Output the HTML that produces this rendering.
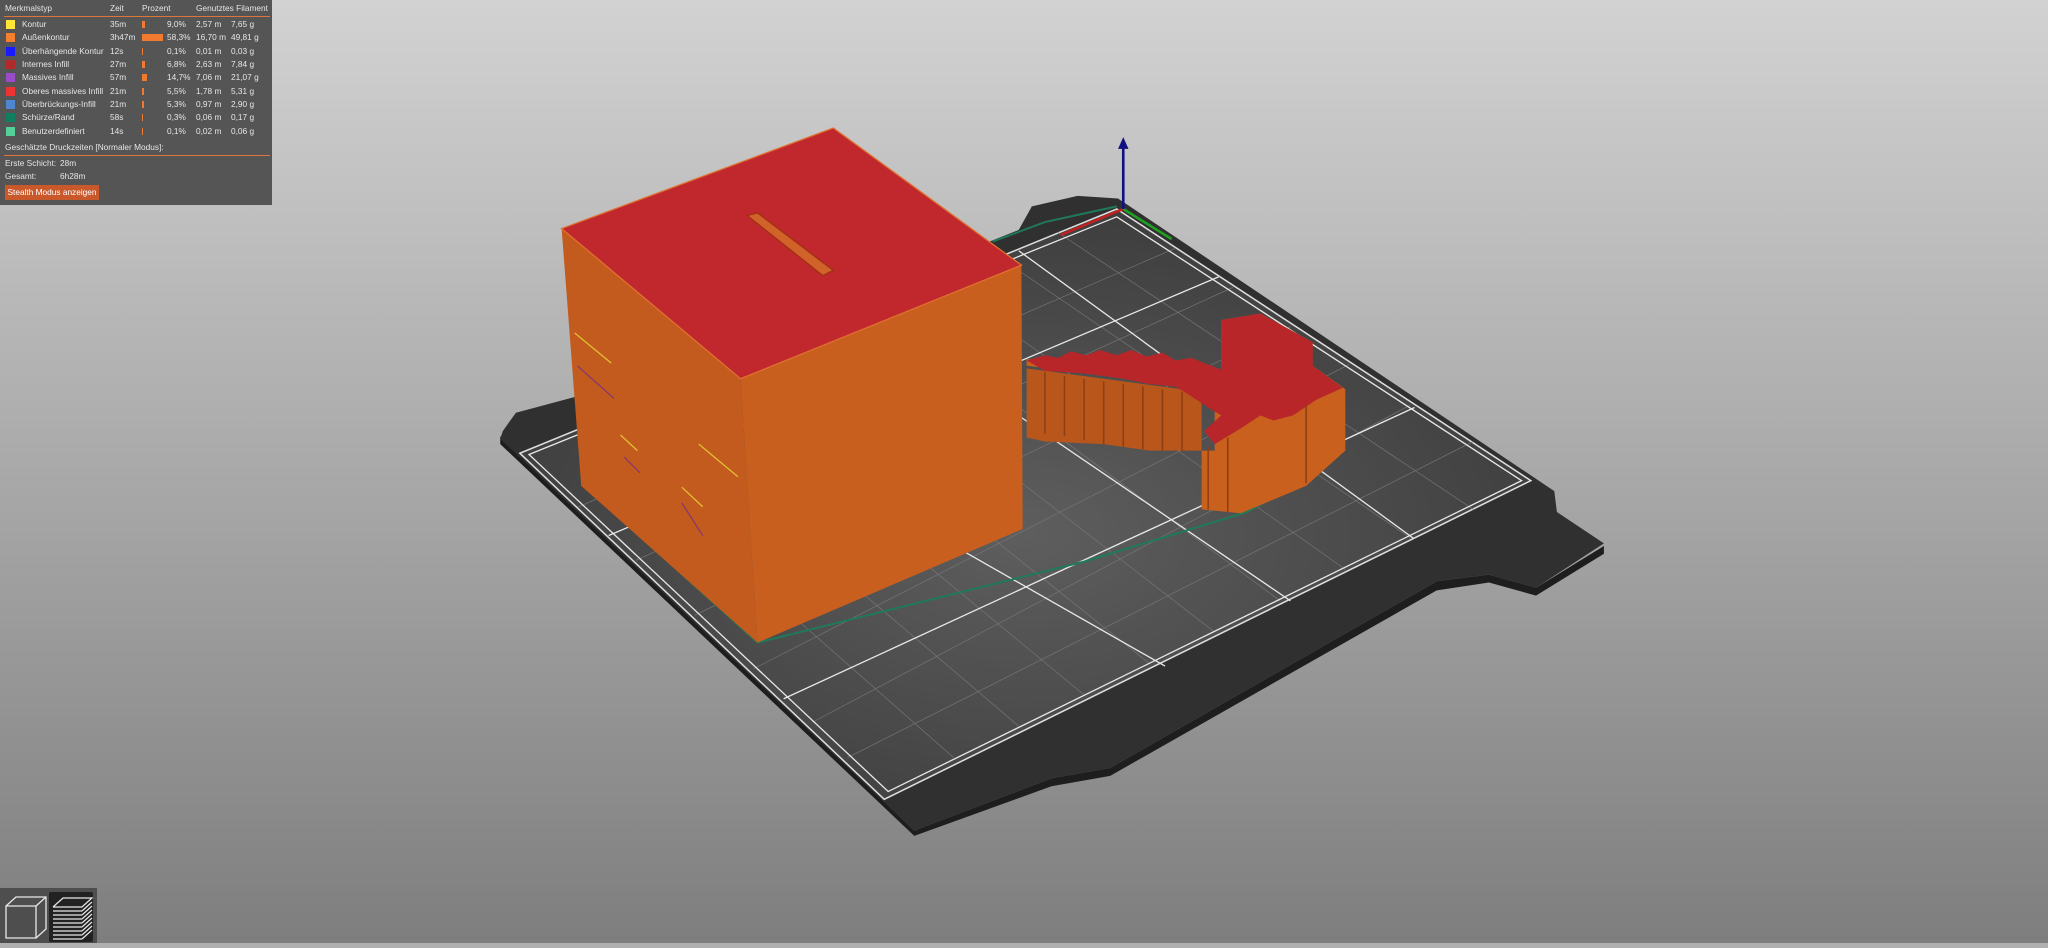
<!DOCTYPE html>
<html><head><meta charset="utf-8"><style>
html,body{margin:0;padding:0;width:2048px;height:943px;overflow:hidden;background:#b0b0b0;font-family:"Liberation Sans","DejaVu Sans",sans-serif}
#scene{position:absolute;left:0;top:0;width:2048px;height:943px}
#legend{position:absolute;left:0;top:0;width:272px;height:205px;background:#555556;color:#e6e6e6;font-size:8.3px}
.r{position:absolute;left:0;height:13px;line-height:13px;white-space:nowrap}
.r span{position:absolute}
.sw{position:absolute;left:6px;width:9px;height:9px;top:2px}
.bar{position:absolute;top:3px;height:7px;background:#f07a30}
.hl{position:absolute;left:4px;width:266px;height:1px;background:#e0743a}
#btn{position:absolute;left:5px;top:185px;width:94px;height:15px;background:#c9582a;color:#fff;font-size:8.3px;line-height:15px;text-align:center;white-space:nowrap}
#views{position:absolute;left:0;top:888px;width:97px;height:55px;background:#4e4e4e}
</style></head><body>
<svg id="scene" viewBox="0 0 1568 722" preserveAspectRatio="none">
<defs>
<linearGradient id="bg" x1="0" y1="0" x2="0" y2="1"><stop offset="0" stop-color="#d2d2d2"/><stop offset="0.5" stop-color="#a9a9a9"/><stop offset="1" stop-color="#7e7e7e"/></linearGradient>
<radialGradient id="gr" cx="0.5" cy="0.55" r="0.55"><stop offset="0" stop-color="#5e5e5e"/><stop offset="1" stop-color="#3e3e3e"/></radialGradient>
</defs>
<rect width="1568" height="722" fill="url(#bg)"/>
<!-- bed -->
<polygon points="383,340 700,640 805,602 850,594 1100,452 1140,446 1176,456 1228,424 1228,418 1176,450 1140,440 1100,445 850,588 805,596 700,636 383,334" fill="#1e1e1e"/>
<polygon points="385,330 395,316 440,304 470,300 780,176 790,158 825,150 856,152 1190,376 1192,392 1228,416 1176,450 1140,440 1100,445 850,588 805,596 700,636 383,336" fill="#303030"/>
<polygon points="398,347 855,160 1172,368 677,612" fill="url(#gr)" stroke="#ddd" stroke-width="1.2"/>
<g stroke="#777" stroke-width="0.5">
<line x1="443" y1="388" x2="900" y2="190"/><line x1="487" y1="429" x2="944" y2="220"/><line x1="532" y1="471" x2="988" y2="250"/><line x1="577" y1="512" x2="1033" y2="279"/><line x1="622" y1="553" x2="1080" y2="310"/><line x1="649" y1="580" x2="1128" y2="338"/>
<line x1="444" y1="328" x2="730" y2="580"/><line x1="490" y1="309" x2="780" y2="556"/><line x1="537" y1="290" x2="830" y2="532"/><line x1="583" y1="271" x2="880" y2="508"/><line x1="630" y1="252" x2="930" y2="484"/><line x1="675" y1="234" x2="980" y2="460"/><line x1="720" y1="216" x2="1030" y2="436"/><line x1="765" y1="197" x2="1080" y2="412"/><line x1="810" y1="178" x2="1128" y2="390"/>
</g>
<g stroke="#e8e8e8" stroke-width="1">
<line x1="466" y1="410" x2="933" y2="212"/><line x1="600" y1="535" x2="1083" y2="312"/>
<line x1="520" y1="298" x2="892" y2="510"/><line x1="665" y1="240" x2="988" y2="460"/><line x1="780" y1="192" x2="1082" y2="412"/>
<polygon points="405,348 855,166 1165,368 680,606" fill="none"/>
</g>
<polyline points="445,370 580,492 830,430 955,392 1010,360 1030,330" fill="none" stroke="#1f7a5a" stroke-width="1.5"/>
<polyline points="760,185 800,170 855,158" fill="none" stroke="#1f7a5a" stroke-width="1.5"/>
<!-- second object -->
<polygon points="786,280 930,298 930,345 920,345 920,390 950,393 1000,372 1030,345 1030,298 1005,280 1005,262 965,240 935,245 935,283 786,275" fill="#c9601e"/>
<polygon points="786,335 800,338 845,340 880,345 920,345 920,300 786,282" fill="#b8561c"/>
<polygon points="786,276 800,272 810,274 820,269 832,272 842,268 855,272 866,268 878,273 890,270 900,276 912,274 935,283 935,245 965,240 1005,262 1005,280 1028,297 1008,306 990,318 975,322 965,318 950,328 930,340 922,330 935,318 925,312 910,302 900,296 880,294 860,290 830,286 800,284" fill="#b8262a"/>
<g stroke="#8e3f14" stroke-width="1.2">
<line x1="800" y1="285" x2="800" y2="332"/><line x1="815" y1="288" x2="815" y2="334"/><line x1="830" y1="290" x2="830" y2="337"/><line x1="845" y1="292" x2="845" y2="340"/><line x1="860" y1="294" x2="860" y2="342"/><line x1="875" y1="296" x2="875" y2="344"/><line x1="890" y1="298" x2="890" y2="345"/><line x1="905" y1="300" x2="905" y2="346"/><line x1="925" y1="342" x2="925" y2="390"/><line x1="940" y1="335" x2="940" y2="392"/><line x1="1000" y1="310" x2="1000" y2="370"/>
</g>
<!-- box -->
<polygon points="430,175 567,290 580,492 445,372" fill="#c35a1e"/>
<polygon points="567,290 782,203 783,405 580,492" fill="#c95f1e"/>
<polygon points="430,175 638,98 782,203 567,290" fill="#c0282d" stroke="#e07030" stroke-width="1"/>
<polygon points="572,165 580,163 638,207 630,211" fill="#d0622a" stroke="#a03010" stroke-width="1"/>
<g stroke="#e0c030" stroke-width="1"><line x1="440" y1="255" x2="468" y2="278"/><line x1="475" y1="333" x2="488" y2="345"/><line x1="535" y1="340" x2="565" y2="365"/><line x1="522" y1="373" x2="538" y2="388"/></g>
<g stroke="#7a3080" stroke-width="0.8"><line x1="442" y1="280" x2="470" y2="305"/><line x1="478" y1="350" x2="490" y2="362"/><line x1="522" y1="385" x2="538" y2="410"/></g>
<line x1="860" y1="160" x2="812" y2="180" stroke="#c02020" stroke-width="2"/>
<line x1="860" y1="160" x2="897" y2="183" stroke="#20a020" stroke-width="2"/>
<line x1="860" y1="160" x2="860" y2="112" stroke="#101080" stroke-width="2"/>
<polygon points="856,114 864,114 860,105" fill="#101080"/>
</svg>
<div id="legend">
<div class="r" style="top:2px"><span style="left:5px">Merkmalstyp</span><span style="left:110px">Zeit</span><span style="left:142px">Prozent</span><span style="left:196px">Genutztes Filament</span></div>
<div class="hl" style="top:16px"></div>
<div class="r" style="top:18px"><i class="sw" style="background:#ffe535"></i><span style="left:22px">Kontur</span><span style="left:110px">35m</span><i class="bar" style="left:142px;width:3px"></i><span style="left:167px">9,0%</span><span style="left:196px">2,57 m</span><span style="left:231px">7,65 g</span></div>
<div class="r" style="top:31px"><i class="sw" style="background:#f57f2e"></i><span style="left:22px">Außenkontur</span><span style="left:110px">3h47m</span><i class="bar" style="left:142px;width:21px"></i><span style="left:167px">58,3%</span><span style="left:196px">16,70 m</span><span style="left:231px">49,81 g</span></div>
<div class="r" style="top:45px"><i class="sw" style="background:#1a1aff"></i><span style="left:22px">Überhängende Kontur</span><span style="left:110px">12s</span><i class="bar" style="left:142px;width:1px"></i><span style="left:167px">0,1%</span><span style="left:196px">0,01 m</span><span style="left:231px">0,03 g</span></div>
<div class="r" style="top:58px"><i class="sw" style="background:#b02a2a"></i><span style="left:22px">Internes Infill</span><span style="left:110px">27m</span><i class="bar" style="left:142px;width:3px"></i><span style="left:167px">6,8%</span><span style="left:196px">2,63 m</span><span style="left:231px">7,84 g</span></div>
<div class="r" style="top:71px"><i class="sw" style="background:#9a4cc8"></i><span style="left:22px">Massives Infill</span><span style="left:110px">57m</span><i class="bar" style="left:142px;width:5px"></i><span style="left:167px">14,7%</span><span style="left:196px">7,06 m</span><span style="left:231px">21,07 g</span></div>
<div class="r" style="top:85px"><i class="sw" style="background:#ee3333"></i><span style="left:22px">Oberes massives Infill</span><span style="left:110px">21m</span><i class="bar" style="left:142px;width:2px"></i><span style="left:167px">5,5%</span><span style="left:196px">1,78 m</span><span style="left:231px">5,31 g</span></div>
<div class="r" style="top:98px"><i class="sw" style="background:#4e86d0"></i><span style="left:22px">Überbrückungs-Infill</span><span style="left:110px">21m</span><i class="bar" style="left:142px;width:2px"></i><span style="left:167px">5,3%</span><span style="left:196px">0,97 m</span><span style="left:231px">2,90 g</span></div>
<div class="r" style="top:111px"><i class="sw" style="background:#0f7f60"></i><span style="left:22px">Schürze/Rand</span><span style="left:110px">58s</span><i class="bar" style="left:142px;width:1px"></i><span style="left:167px">0,3%</span><span style="left:196px">0,06 m</span><span style="left:231px">0,17 g</span></div>
<div class="r" style="top:125px"><i class="sw" style="background:#55d098"></i><span style="left:22px">Benutzerdefiniert</span><span style="left:110px">14s</span><i class="bar" style="left:142px;width:1px"></i><span style="left:167px">0,1%</span><span style="left:196px">0,02 m</span><span style="left:231px">0,06 g</span></div>
<div class="r" style="top:141px"><span style="left:5px">Geschätzte Druckzeiten [Normaler Modus]:</span></div>
<div class="hl" style="top:155px"></div>
<div class="r" style="top:157px"><span style="left:5px">Erste Schicht:</span><span style="left:60px">28m</span></div>
<div class="r" style="top:170px"><span style="left:5px">Gesamt:</span><span style="left:60px">6h28m</span></div>
<div id="btn">Stealth Modus anzeigen</div>
</div>
<div id="views">
<svg width="97" height="55" viewBox="0 0 97 55">
<g fill="none" stroke="#e8e8e8" stroke-width="1.3">
<polygon points="6,18 36,18 36,50 6,50"/><polyline points="6,18 16,9 46,9 46,41 36,50"/><line x1="36" y1="18" x2="46" y2="9"/>
</g>
<rect x="49" y="4" width="44" height="50" fill="#222" rx="2"/>
<g fill="none" stroke="#e8e8e8" stroke-width="1.2">
<polyline points="53,19 63,10 92,10 82,19 53,19"/>
<line x1="53" y1="23" x2="82" y2="23"/><line x1="53" y1="27" x2="82" y2="27"/><line x1="53" y1="31" x2="82" y2="31"/><line x1="53" y1="35" x2="82" y2="35"/><line x1="53" y1="39" x2="82" y2="39"/><line x1="53" y1="43" x2="82" y2="43"/><line x1="53" y1="47" x2="82" y2="47"/><line x1="53" y1="51" x2="82" y2="51"/>
<line x1="82" y1="23" x2="92" y2="14"/><line x1="82" y1="27" x2="92" y2="18"/><line x1="82" y1="31" x2="92" y2="22"/><line x1="82" y1="35" x2="92" y2="26"/><line x1="82" y1="39" x2="92" y2="30"/><line x1="82" y1="43" x2="92" y2="34"/><line x1="82" y1="47" x2="92" y2="38"/><line x1="82" y1="51" x2="92" y2="42"/>
</g>
</svg>
</div>
</body></html>
